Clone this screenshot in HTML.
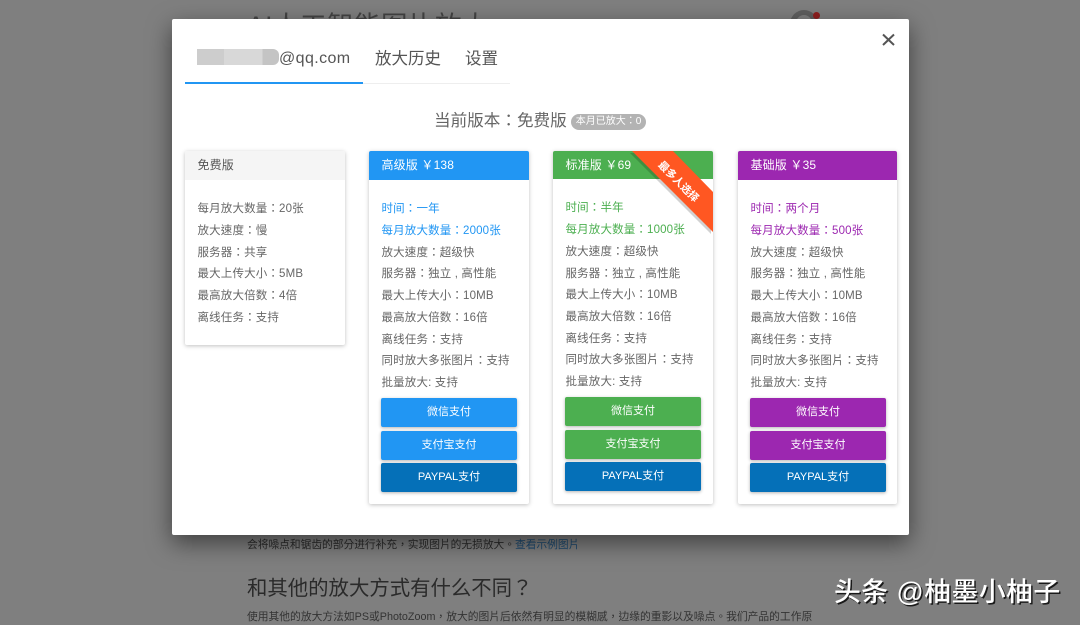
<!DOCTYPE html>
<html lang="zh-TW"><head><meta charset="utf-8"><title>AI</title>
<style>
html,body{margin:0;padding:0;width:1080px;height:625px;overflow:hidden;background:#7f7f7f}
body{position:relative;font-family:"Liberation Sans","Noto Sans CJK TC",sans-serif;color:#555}
.a{position:absolute;white-space:nowrap}
#m{position:absolute;left:172px;top:19px;width:737px;height:516px;background:#fff;border-radius:2px;box-shadow:0 8px 24px rgba(0,0,0,.5)}
.c{position:absolute;background:#fff;border-radius:2px;box-shadow:0 1px 4px rgba(0,0,0,.25)}
.h{position:absolute;left:0;top:0;right:0;height:29px;line-height:29px;padding-left:12.5px;font-size:12px;color:#fff;border-radius:2px 2px 0 0;letter-spacing:.15px}
.l{position:absolute;left:12.5px;margin-top:1px;font-size:11.5px;line-height:16px;color:#666;white-space:nowrap;letter-spacing:.15px}
.b{position:absolute;left:12px;width:136px;height:29px;line-height:29px;text-align:center;color:#fff;font-size:11px;border-radius:2px;box-shadow:0 1px 3px rgba(0,0,0,.3)}
.p{background:#0570b8}
</style></head><body>

<div class="a" lang="zh-CN" style="left:247px;top:4px;font-size:26.5px;color:#444;letter-spacing:.5px;font-family:'Liberation Sans','Noto Sans CJK SC',sans-serif">AI人工智能图片放大</div>
<div class="a" style="left:790px;top:10px;width:28px;height:28px;border-radius:50%;background:#5f5f5f"></div>
<div class="a" style="left:796px;top:15px;width:16px;height:16px;border-radius:50%;background:#7f7f7f"></div>
<div class="a" style="left:813px;top:12px;width:7px;height:7px;border-radius:50%;background:#8f2020"></div>

<div class="a" style="left:247px;top:537px;font-size:10.72px;line-height:16px;color:#2b2b2b">会将噪点和锯齿的部分进行补充，实现图片的无损放大。<span style="color:#1d4a70">查看示例图片</span></div>
<div class="a" style="left:247px;top:576px;font-size:20.4px;line-height:26px;color:#2a2a2a">和其他的放大方式有什么不同？</div>
<div class="a" style="left:247px;top:609px;font-size:10.77px;line-height:16px;color:#333">使用其他的放大方法如PS或PhotoZoom，放大的图片后依然有明显的模糊感，边缘的重影以及噪点。我们产品的工作原</div>

<div class="a" lang="zh-CN" style="left:834px;top:574px;font-family:'Liberation Sans','Noto Sans CJK SC',sans-serif;font-size:26.8px;line-height:36px;color:#fff;font-weight:500;text-shadow:1.5px 1.5px 0 #1a1a1a;letter-spacing:.5px">头条 @柚墨小柚子</div>

<div id="m">
  <div class="a" style="left:25px;top:30px;width:82px;height:16px;background:linear-gradient(90deg,#cdcdcd 0 33%,#d8d8d8 33% 80%,#c4c4c4 80%);border-radius:0 6px 6px 0"></div>
  <div class="a" style="left:107px;top:30px;font-size:16px;line-height:20px;color:#555;letter-spacing:.4px">@qq.com</div>
  <div class="a" style="left:203px;top:30px;font-size:16.5px;line-height:20px;color:#555">放大历史</div>
  <div class="a" style="left:293px;top:30px;font-size:16.5px;line-height:20px;color:#555">设置</div>
  <div class="a" style="left:13px;top:64px;width:325px;height:1px;background:#eee"></div>
  <div class="a" style="left:13px;top:63px;width:178px;height:2px;background:#2196f3"></div>
  <svg class="a" style="left:709px;top:13px" width="16" height="16" viewBox="0 0 16 16"><path d="M2 2.5L13 13M13 2.5L2 13" stroke="#555" stroke-width="2" fill="none"/></svg>

  <div class="a" style="left:262px;top:92px;font-size:16.6px;line-height:20px;color:#666">当前版本：免费版</div>
  <div class="a" style="left:399px;top:95px;width:75px;height:16px;line-height:16px;border-radius:8px;background:#b3b3b3;color:#fff;font-size:10px;text-align:center">本月已放大：0</div>

  <div class="c" style="left:13px;top:132px;width:160px;height:194px">
    <div class="h" style="background:#f5f5f5;color:#555">免费版</div>
    <div class="l" style="top:49px">每月放大数量：20张</div>
    <div class="l" style="top:71px">放大速度：慢</div>
    <div class="l" style="top:93px">服务器：共享</div>
    <div class="l" style="top:114px">最大上传大小：5MB</div>
    <div class="l" style="top:136px">最高放大倍数：4倍</div>
    <div class="l" style="top:158px">离线任务：支持</div>
  </div>

  <div class="c" style="left:197px;top:132px;width:160px;height:353px">
    <div class="h" style="background:#2196f3">高级版 ￥138</div>
    <div class="l" style="top:49px;color:#2196f3">时间：一年</div>
    <div class="l" style="top:71px;color:#2196f3">每月放大数量：2000张</div>
    <div class="l" style="top:93px">放大速度：超级快</div>
    <div class="l" style="top:114px">服务器：独立 , 高性能</div>
    <div class="l" style="top:136px">最大上传大小：10MB</div>
    <div class="l" style="top:158px">最高放大倍数：16倍</div>
    <div class="l" style="top:180px">离线任务：支持</div>
    <div class="l" style="top:201px">同时放大多张图片：支持</div>
    <div class="l" style="top:223px">批量放大: 支持</div>
    <div class="b" style="top:247px;background:#2196f3">微信支付</div>
    <div class="b" style="top:280px;background:#2196f3">支付宝支付</div>
    <div class="b p" style="top:312px">PAYPAL支付</div>
  </div>

  <div class="c" style="left:381px;top:132px;width:160px;height:353px">
    <div class="h" style="background:#4caf50;height:28px;line-height:28px">标准版 ￥69</div>
    <div class="l" style="top:48px;color:#4caf50">时间：半年</div>
    <div class="l" style="top:70px;color:#4caf50">每月放大数量：1000张</div>
    <div class="l" style="top:92px">放大速度：超级快</div>
    <div class="l" style="top:114px">服务器：独立 , 高性能</div>
    <div class="l" style="top:135px">最大上传大小：10MB</div>
    <div class="l" style="top:157px">最高放大倍数：16倍</div>
    <div class="l" style="top:179px">离线任务：支持</div>
    <div class="l" style="top:200px">同时放大多张图片：支持</div>
    <div class="l" style="top:222px">批量放大: 支持</div>
    <div class="b" style="top:246px;background:#4caf50">微信支付</div>
    <div class="b" style="top:279px;background:#4caf50">支付宝支付</div>
    <div class="b p" style="top:311px">PAYPAL支付</div>
  </div>
  <svg class="a" style="left:452px;top:132px;overflow:visible" width="92" height="84" viewBox="0 0 92 84"><path d="M8 0H49L89 41V81Z" fill="#000" opacity=".18" transform="translate(-2 2)"/><path d="M8 0H49L89 41V81Z" fill="#ff5722"/><text x="0" y="0" transform="translate(52 33) rotate(45)" text-anchor="middle" font-size="10.5" font-weight="700" fill="#fff" font-family="Liberation Sans, Noto Sans CJK SC, sans-serif">最多人选择</text></svg>

  <div class="c" style="left:566px;top:132px;width:159px;height:353px">
    <div class="h" style="background:#9c27b0">基础版 ￥35</div>
    <div class="l" style="top:49px;color:#9c27b0">时间：两个月</div>
    <div class="l" style="top:71px;color:#9c27b0">每月放大数量：500张</div>
    <div class="l" style="top:93px">放大速度：超级快</div>
    <div class="l" style="top:114px">服务器：独立 , 高性能</div>
    <div class="l" style="top:136px">最大上传大小：10MB</div>
    <div class="l" style="top:158px">最高放大倍数：16倍</div>
    <div class="l" style="top:180px">离线任务：支持</div>
    <div class="l" style="top:201px">同时放大多张图片：支持</div>
    <div class="l" style="top:223px">批量放大: 支持</div>
    <div class="b" style="top:247px;background:#9c27b0">微信支付</div>
    <div class="b" style="top:280px;background:#9c27b0">支付宝支付</div>
    <div class="b p" style="top:312px">PAYPAL支付</div>
  </div>
</div>
</body></html>
